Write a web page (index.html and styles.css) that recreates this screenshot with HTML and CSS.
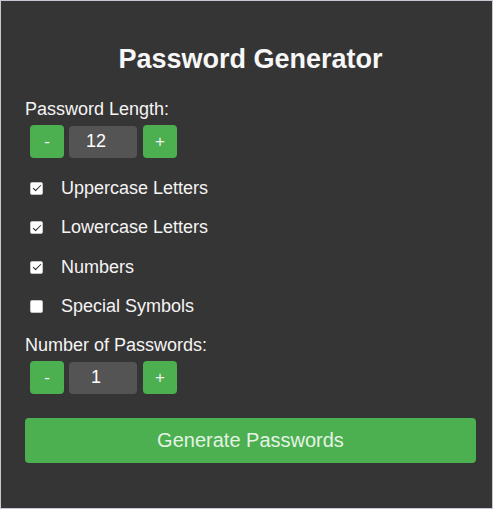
FILE: index.html
```html
<!DOCTYPE html>
<html lang="en">
<head>
    <meta charset="UTF-8">
    <meta name="viewport" content="width=device-width, initial-scale=1.0">
    <title>Password Generator</title>
    <link rel="stylesheet" href="styles.css">
</head>
<body>
    <div class="frame">
        <div class="generator">
            <h1>Password Generator</h1>

            <label class="field-label">Password Length:</label>
            <div class="stepper">
                <button class="step-btn" type="button">-</button>
                <input class="step-value" type="text" value="12">
                <button class="step-btn" type="button">+</button>
            </div>

            <div class="options">
                <label class="option"><input type="checkbox" checked><span>Uppercase Letters</span></label>
                <label class="option"><input type="checkbox" checked><span>Lowercase Letters</span></label>
                <label class="option"><input type="checkbox" checked><span>Numbers</span></label>
                <label class="option"><input type="checkbox"><span>Special Symbols</span></label>
            </div>

            <label class="field-label">Number of Passwords:</label>
            <div class="stepper">
                <button class="step-btn" type="button">-</button>
                <input class="step-value" type="text" value="1">
                <button class="step-btn" type="button">+</button>
            </div>

            <button class="generate" type="button">Generate Passwords</button>
        </div>
    </div>
</body>
</html>
```

FILE: styles.css
```css
body {
    margin: 0;
    font-family: "Liberation Sans", Arial, sans-serif;
    background-color: #fff;
}
.frame {
    width: 493px;
    height: 509px;
    box-sizing: border-box;
    border: 1px solid #c8c7d3;
    background-color: #363535;
    color: #f4f4f4;
}
.generator {
    padding: 43px 16px 0 24px;
}
h1 {
    margin: 0 0 24px;
    text-align: center;
    font-size: 27px;
    line-height: 31px;
    font-weight: bold;
    color: #f7f7f7;
}
.field-label {
    display: block;
    font-size: 18px;
    line-height: 21px;
    margin-bottom: 5px;
}
.stepper {
    display: flex;
    align-items: center;
    gap: 5px;
    margin-left: 5px;
}
.step-btn {
    width: 34px;
    height: 33px;
    border: none;
    border-radius: 4px;
    background-color: #4caf50;
    color: #f2f2f2;
    font-family: inherit;
    font-size: 17px;
    cursor: pointer;
}
.step-value {
    width: 68px;
    height: 32px;
    box-sizing: border-box;
    padding: 0 14px 0 0;
    border: none;
    border-radius: 4px;
    background-color: #555454;
    color: #fff;
    font-family: inherit;
    font-size: 18px;
    text-align: center;
    margin-right: 1px;
}
.options {
    display: flex;
    flex-direction: column;
    gap: 18.5px;
    margin: 19.5px 0 18px 4px;
}
.option {
    display: flex;
    align-items: center;
    font-size: 18px;
    line-height: 21px;
    height: 21px;
}
.option input {
    appearance: none;
    width: 13px;
    height: 13px;
    margin: 0 18px 0 1px;
    background-color: #fff;
    border: 1px solid #c4c4c4;
    box-sizing: border-box;
    border-radius: 2px;
    position: relative;
}
.option input:checked::after {
    content: "";
    position: absolute;
    left: 3.5px;
    top: 0.5px;
    width: 3px;
    height: 7px;
    border: solid #222;
    border-width: 0 1.5px 1.5px 0;
    transform: rotate(45deg);
}
.generate {
    display: block;
    width: 100%;
    height: 45px;
    margin-top: 24px;
    border: none;
    border-radius: 4px;
    background-color: #4caf50;
    color: #e4f3e4;
    font-family: inherit;
    font-size: 20px;
    cursor: pointer;
}
```
